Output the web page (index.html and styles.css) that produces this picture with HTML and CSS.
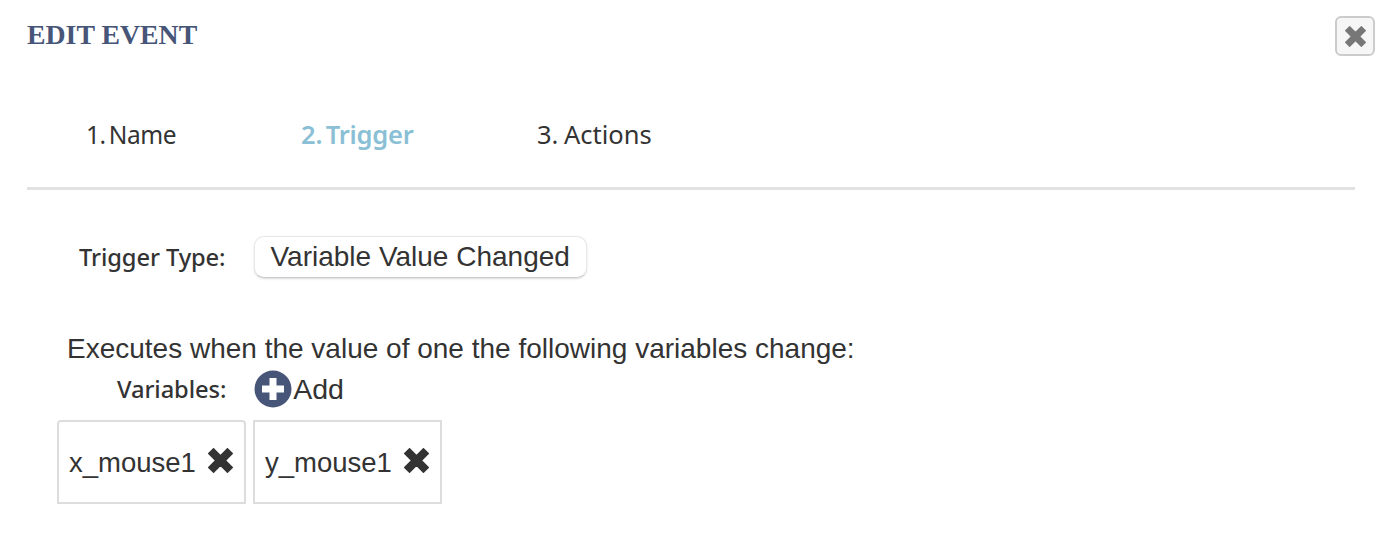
FILE: index.html
```html
<!DOCTYPE html>
<html lang="en">
<head>
<meta charset="utf-8">
<title>Edit Event</title>
<link rel="stylesheet" href="styles.css">
</head>
<body>
<div class="dialog">
  <header class="head">
    <h1 class="title">EDIT EVENT</h1>
    <button class="close" aria-label="Close">
      <svg class="x" viewBox="3 3 18 18" width="21" height="21"><path d="M3.500 7 7 3.500 12 8.500 17 3.500 20.500 7 15.500 12 20.500 17 17 20.500 12 15.500 7 20.500 3.500 17 8.500 12Z" fill="#777" stroke="#777" stroke-width="1" stroke-linejoin="round"/></svg>
    </button>
  </header>
  <nav class="tabs">
    <span class="tab tab-one">1. Name</span>
    <span class="tab tab-two">2. Trigger</span>
    <span class="tab tab-three">3. Actions</span>
  </nav>
  <div class="trigger">
    <span class="label label-trigger">Trigger Type:</span>
    <span class="select">Variable Value Changed</span>
  </div>
  <p class="desc">Executes when the value of one the following variables change:</p>
  <div class="vars">
    <span class="label label-vars">Variables:</span>
    <span class="add">
      <svg class="plus" viewBox="0 0 38 38" width="38" height="38"><circle cx="19" cy="19" r="18.500" fill="#475578"/><path d="M15.500 8h7v7.500H30v7h-7.500V30h-7v-7.500H8v-7h7.500Z" fill="#fff"/></svg>
      <span class="add-text">Add</span>
    </span>
  </div>
  <div class="chips">
    <div class="chip chip-first">x_mouse1 <svg class="rm" viewBox="3 3 18 18" width="25" height="25"><path d="M3.500 7 7 3.500 12 8.500 17 3.500 20.500 7 15.500 12 20.500 17 17 20.500 12 15.500 7 20.500 3.500 17 8.500 12Z" fill="#333" stroke="#333" stroke-width="1" stroke-linejoin="round"/></svg></div>
    <div class="chip">y_mouse1 <svg class="rm" viewBox="3 3 18 18" width="25" height="25"><path d="M3.500 7 7 3.500 12 8.500 17 3.500 20.500 7 15.500 12 20.500 17 17 20.500 12 15.500 7 20.500 3.500 17 8.500 12Z" fill="#333" stroke="#333" stroke-width="1" stroke-linejoin="round"/></svg></div>
  </div>
</div>
</body>
</html>
```
FILE: styles.css
```css
* { box-sizing: border-box; }
html, body { margin: 0; padding: 0; background: #fff; }
body { width: 1384px; height: 540px; overflow: hidden; font-family: "Liberation Sans", Arial, sans-serif; color: #333; }
.dialog { padding: 16px 29px 0 27px; }
.head { display: flex; justify-content: space-between; align-items: flex-start; height: 72px; }
.title { margin: 3px 0 0; font: bold 27.800px/32px "Liberation Serif", serif; color: #475578; }
.close { margin: 0 -20px 0 0; padding: 0; width: 40px; height: 40px; display: flex; align-items: center; justify-content: center; background: #f6f6f6; border: 2px solid #ccc; border-radius: 6px; }
.tabs { display: flex; align-items: baseline; height: 102px; padding: 27px 0 0 59px; border-bottom: 3px solid #e2e2e2; font: 25.500px/38px "Noto Sans", sans-serif; color: #333; }
.tab-one { width: 215px; font-size: 24.500px; word-spacing: -3px; letter-spacing: -0.400px; }
.tab-two { width: 236px; color: #8abfd5; font-weight: 600; word-spacing: -3px; letter-spacing: -0.200px; }
.tab-three { word-spacing: -1px; }
.trigger { display: flex; align-items: center; margin-top: 46px; height: 42px; }
.label { font: 500 23.700px/30px "Noto Sans", sans-serif; letter-spacing: -0.100px; color: #333; }
.label-trigger { margin-left: 52px; }
.select { margin-left: 29px; width: 333px; height: 42px; padding-left: 15px; font-size: 28px; line-height: 40px; background: #fff; border: 1px solid #e8e8e8; border-bottom-color: #ccc; border-radius: 10px; box-shadow: 0 1px 2px rgba(0,0,0,.15); }
.desc { margin: 53px 0 0 40px; font-size: 28px; line-height: 36px; }
.vars { display: flex; align-items: center; margin-top: 3px; height: 38px; }
.label-vars { margin-left: 90px; }
.add { display: flex; align-items: center; margin-left: 28px; font-size: 28.500px; line-height: 34px; }
.add-text { margin-left: 1px; }
.plus { display: block; }
.chips { display: flex; gap: 7px; margin: 12px 0 0 30px; }
.chip { display: flex; align-items: center; gap: 12px; width: 189px; height: 84px; padding: 2px 0 0 10px; border: 2px solid #ddd; font-size: 27.500px; line-height: 34px; }
.chip-first { border-radius: 4px 4px 0 0; }
.rm { display: block; margin-top: -6px; }
```
